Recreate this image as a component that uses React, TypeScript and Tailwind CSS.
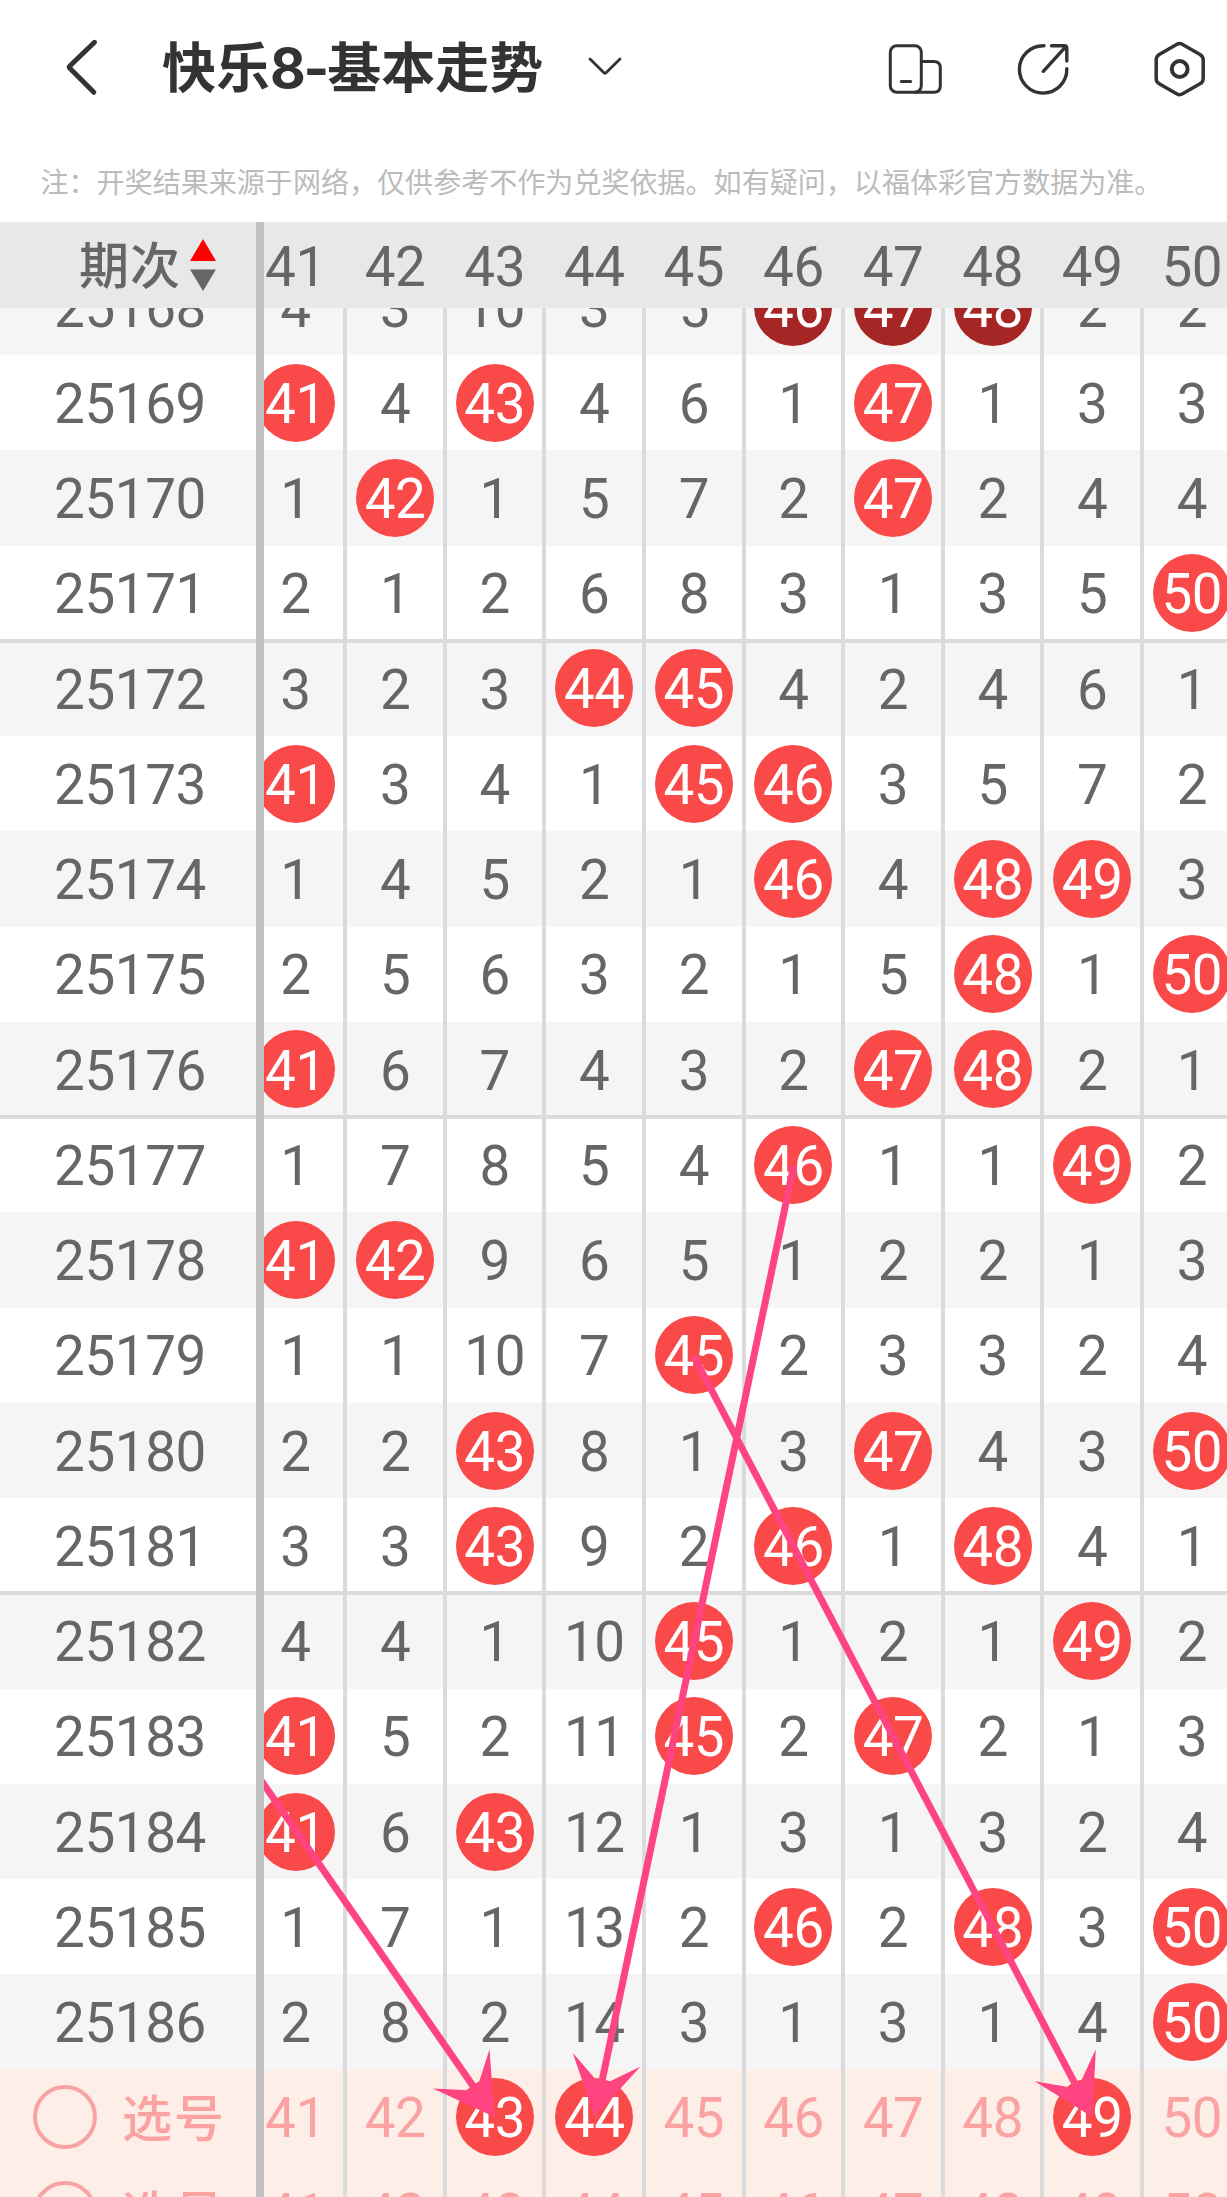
import { clsx } from "clsx";

const COLUMNS = [41, 42, 43, 44, 45, 46, 47, 48, 49, 50];

// A value equal to its column number is a drawn ball; any other value counts misses.
const DRAWS: [string, number[]][] = [
  ["25168", [4, 3, 10, 3, 5, 46, 47, 48, 2, 2]],
  ["25169", [41, 4, 43, 4, 6, 1, 47, 1, 3, 3]],
  ["25170", [1, 42, 1, 5, 7, 2, 47, 2, 4, 4]],
  ["25171", [2, 1, 2, 6, 8, 3, 1, 3, 5, 50]],
  ["25172", [3, 2, 3, 44, 45, 4, 2, 4, 6, 1]],
  ["25173", [41, 3, 4, 1, 45, 46, 3, 5, 7, 2]],
  ["25174", [1, 4, 5, 2, 1, 46, 4, 48, 49, 3]],
  ["25175", [2, 5, 6, 3, 2, 1, 5, 48, 1, 50]],
  ["25176", [41, 6, 7, 4, 3, 2, 47, 48, 2, 1]],
  ["25177", [1, 7, 8, 5, 4, 46, 1, 1, 49, 2]],
  ["25178", [41, 42, 9, 6, 5, 1, 2, 2, 1, 3]],
  ["25179", [1, 1, 10, 7, 45, 2, 3, 3, 2, 4]],
  ["25180", [2, 2, 43, 8, 1, 3, 47, 4, 3, 50]],
  ["25181", [3, 3, 43, 9, 2, 46, 1, 48, 4, 1]],
  ["25182", [4, 4, 1, 10, 45, 1, 2, 1, 49, 2]],
  ["25183", [41, 5, 2, 11, 45, 2, 47, 2, 1, 3]],
  ["25184", [41, 6, 43, 12, 1, 3, 1, 3, 2, 4]],
  ["25185", [1, 7, 1, 13, 2, 46, 2, 48, 3, 50]],
  ["25186", [2, 8, 2, 14, 3, 1, 3, 1, 4, 50]],
];

const GROUP_STARTS = ["25172", "25177", "25182"];
const PICKS: number[][] = [[43, 44, 49], []];

// Arrow ends in table-body coordinates.
const ARROWS = [
  { x1: 194.3, y1: 1376, x2: 494.5, y2: 1809 },
  { x1: 793.7, y1: 858, x2: 594.5, y2: 1809 },
  { x1: 693.7, y1: 1048, x2: 1092.4, y2: 1809 },
];

function NavBar() {
  return (
    <header className="flex h-[134px] items-center text-[#333]">
      <svg className="ml-[62px] h-[60px] w-10 shrink-0" viewBox="0 0 40 60" fill="none" stroke="currentColor" strokeWidth="5" strokeLinecap="round" strokeLinejoin="round">
        <path d="M32.5 5.3 7.8 29 Q6.8 30 7.8 31.2 L31.8 55.3" />
      </svg>
      <h1 className="ml-[60px] flex h-[80px] items-center text-[54px] leading-[80px] font-bold whitespace-nowrap">
        <span className="-mt-0.5">
          快乐<span className="font-[Inter] text-[55px] tracking-[-2.2px]">8-</span>基本走势
        </span>
      </h1>
      <svg className="mt-[-2px] ml-[42px] h-6 w-10" viewBox="0 0 40 24" fill="none" stroke="currentColor" strokeWidth="2.8" strokeLinecap="round" strokeLinejoin="round">
        <path d="M5 5 19.2 19 Q20 19.7 20.8 19 L35 5" />
      </svg>
      <div className="ml-auto flex items-center gap-[73px] pt-[3px] pr-[19.5px]">
        <svg className="size-[56px]" viewBox="0 0 56 56" fill="none" stroke="currentColor" strokeWidth="3" strokeLinecap="round">
          <rect x="3.3" y="4.7" width="31" height="46.6" rx="6.5" />
          <path d="M34.3 20.5h12.5q6.5 0 6.5 6.5v17.8q0 6.5-6.5 6.5H28" />
          <path d="M14.3 40.5h9.4" />
        </svg>
        <svg className="-ml-px size-[56px]" viewBox="0 0 56 56" fill="none" stroke="currentColor" strokeWidth="3.4" strokeLinecap="round" strokeLinejoin="round">
          <path d="M29 4.7A23.7 23.7 0 1 0 51.8 27.6" />
          <path d="M28.3 30.3 50.8 5.7M36.5 4.7h12.7q2.6 0 2.6 2.6V20" />
        </svg>
        <svg className="ml-2 size-[56px]" viewBox="0 0 56 56" fill="none" stroke="currentColor" strokeWidth="3.5" strokeLinejoin="round">
          <path d="M24.6 3.4q3-1.8 6 0L48 13.4q3.2 1.8 3.2 5.4v18.6q0 3.6-3.2 5.4L30.6 52.8q-3 1.8-6 0L7.2 42.8Q4.2 41 4.2 37.4V18.8q0-3.6 3-5.4Z" />
          <circle cx="27.7" cy="28" r="7.9" strokeWidth="4" />
        </svg>
      </div>
    </header>
  );
}

function PeriodHeader() {
  return (
    <div className="flex h-full w-64 shrink-0 items-center pl-[79px]">
      <span className="-mt-1.5 font-['Noto_Sans_CJK_SC',sans-serif] text-[50px] leading-[76px] tracking-[1px]">期次</span>
      <svg className="ml-[9px] h-[52px] w-[26px]" viewBox="0 0 26 52">
        <path d="M13 0 26 22H0Z" fill="#ff0000" />
        <path d="M0 30.5H26L13 52Z" fill="#666" />
      </svg>
    </div>
  );
}

function Divider() {
  return <div className="relative z-20 h-full w-2 shrink-0 bg-[#c0c0c0]" />;
}

function Ball({ value, dark }: { value: number; dark?: boolean }) {
  return (
    <span className={clsx("flex size-[78px] shrink-0 items-center justify-center rounded-full pt-[3px] text-white", dark ? "bg-[#a62626]" : "bg-[#fa4949]")}>
      {value}
    </span>
  );
}

function Cells({ values, balls, dark }: { values: number[]; balls: number[]; dark?: boolean }) {
  return (
    <div className="h-full min-w-0 flex-1 overflow-hidden">
      <div className="-ml-[16.3px] flex h-full">
        {values.map((value, i) => (
          <div key={COLUMNS[i]} className="flex h-full w-[99.6px] shrink-0 items-center justify-center border-r-4 border-[#dbdbdb]">
            {balls.includes(value) ? <Ball value={value} dark={dark} /> : <span className="pt-[3px]">{value}</span>}
          </div>
        ))}
      </div>
    </div>
  );
}

function TableHeader() {
  return (
    <div className="flex h-[86px] items-center bg-[#e8e8e8]">
      <PeriodHeader />
      <Divider />
      <div className="min-w-0 flex-1 overflow-hidden pt-1">
        <div className="-ml-[16.3px] flex">
          {COLUMNS.map((n) => (
            <div key={n} className="w-[99.6px] shrink-0 pr-1 text-center">
              {n}
            </div>
          ))}
        </div>
      </div>
    </div>
  );
}

function Arrows() {
  return (
    <svg className="absolute inset-y-0 right-0 left-[264px] z-30 h-[1889px] w-[963px]" viewBox="264 0 963 1889" fill="#ff4581">
      {ARROWS.map(({ x1, y1, x2, y2 }) => {
        const length = Math.hypot(x2 - x1, y2 - y1);
        const angle = (Math.atan2(y2 - y1, x2 - x1) * 180) / Math.PI;
        return (
          <g key={x2} transform={`translate(${x2} ${y2}) rotate(${angle})`}>
            <rect x={-length} y={-3.5} width={length - 30} height={7} />
            <path d="M0 0-58.5-34.5-37-6.5V6.5L-58.5 34.5Z" />
          </g>
        );
      })}
    </svg>
  );
}

export default function App() {
  return (
    <div className="flex h-[2197px] w-[1227px] flex-col overflow-hidden bg-white font-['Noto_Sans_CJK_SC',sans-serif]">
      <NavBar />
      <p className="h-[88px] pt-[27px] pl-[40.5px] text-[28.05px] leading-10 whitespace-nowrap text-[#bbb]">
        注：开奖结果来源于网络，仅供参考不作为兑奖依据。如有疑问，以福体彩官方数据为准。
      </p>
      <main className="flex min-h-0 flex-1 flex-col font-[Roboto,sans-serif] text-[54.8px] leading-none font-[450] tracking-[-0.4px] text-[#666]">
        <TableHeader />
        <div className="relative min-h-0 flex-1 overflow-hidden">
          <div className="-mt-[48.3px] flex flex-col">
            {DRAWS.map(([period, values], i) => (
              <div
                key={period}
                className={clsx(
                  "relative flex h-[95.28px] shrink-0 items-center",
                  i % 2 === 0 ? "bg-[#f5f5f5]" : "bg-white",
                  GROUP_STARTS.includes(period) && "before:absolute before:inset-x-0 before:-top-0.5 before:z-10 before:h-1 before:bg-[#dbdbdb]",
                )}
              >
                <div className="w-64 shrink-0 pt-[3px] pl-[54px]">{period}</div>
                <Divider />
                <Cells values={values} balls={COLUMNS} dark={i === 0} />
              </div>
            ))}
            {PICKS.map((balls, i) => (
              <div key={i} className="flex h-[95.28px] shrink-0 items-center bg-[#feeee8] text-[#fba3a3]">
                <div className="flex w-64 shrink-0 items-center pl-[33px]">
                  <span className="size-16 rounded-full border-4 border-[#f8a3a3]" />
                  <span className="-mt-1 ml-[25px] font-['Noto_Sans_CJK_SC',sans-serif] text-[50px] leading-[76px] tracking-[2px]">选号</span>
                </div>
                <Divider />
                <Cells values={COLUMNS} balls={balls} />
              </div>
            ))}
          </div>
          <Arrows />
        </div>
      </main>
    </div>
  );
}
